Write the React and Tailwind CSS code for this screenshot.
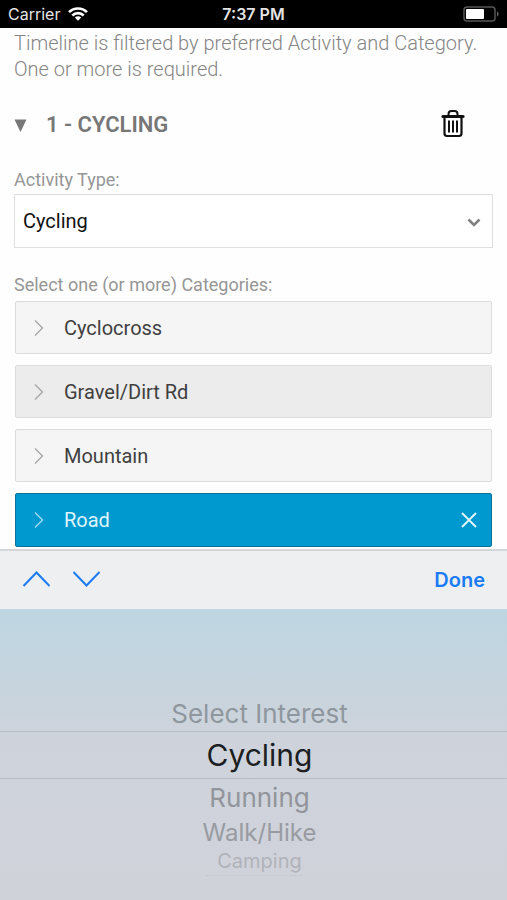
import { useState } from "react";
import { clsx } from "clsx";

const categories = ["Cyclocross", "Gravel/Dirt Rd", "Mountain", "Road"];

// The wheel fades and shrinks towards its lower edge
const wheelItems = [
  { label: "Select Interest", className: "h-9 text-[26px] text-[#8f979e]" },
  {
    label: "Cycling",
    className: "h-12 border-y border-[#b9bdc3] text-[30px] text-[#1c1e22]",
  },
  { label: "Running", className: "h-9 text-[26px] text-[#92959b]" },
  { label: "Walk/Hike", className: "h-9 text-2xl text-[#989ba1]" },
  { label: "Camping", className: "h-5 text-xl text-[#b0b3b9]" },
];

const StatusBar = () => (
  <header className="flex h-7 shrink-0 items-center bg-black px-2 font-[Inter,sans-serif] text-base text-[#e4e4e4]">
    <div className="flex flex-1 items-center gap-2">
      <span>Carrier</span>
      <svg width="20" height="14" viewBox="0 0 20 14" fill="none" aria-hidden="true">
        <g stroke="#fff" strokeWidth="2.6">
          <path d="M1 5.2C6 .2 14 .2 19 5.2" />
          <path d="M4.3 8.5c3.2-3.2 8.2-3.2 11.4 0" />
        </g>
        <path d="M6.8 10.6c1.8-1.7 4.6-1.7 6.4 0L10 13.8z" fill="#fff" />
      </svg>
    </div>
    <span className="font-semibold">7:37 PM</span>
    <div className="flex flex-1 justify-end">
      <svg width="36" height="16" viewBox="0 0 36 16" fill="none" aria-hidden="true">
        <rect x="1" y="1" width="31" height="14" rx="3" stroke="#555" strokeWidth="1.5" />
        <rect x="3" y="3" width="18" height="10" rx="1" fill="#fff" />
        <path d="M34 5.5c2 .6 2 4.4 0 5z" fill="#666" />
      </svg>
    </div>
  </header>
);

const TrashIcon = () => (
  <svg width="24" height="28" viewBox="0 0 24 28" fill="none" stroke="#111" aria-hidden="true">
    <path d="M7.5 5V4q0-3 3-3h3q3 0 3 3v1" strokeWidth="2" />
    <path d="M2 6.500h20" strokeWidth="3.200" strokeLinecap="round" />
    <path d="M3.500 7v16.500q0 2.500 2.500 2.500h12q2.500 0 2.500-2.500V7" strokeWidth="2.200" />
    <path d="M8 10.500v12M12 10.500v12M16 10.500v12" strokeWidth="2" />
  </svg>
);

const CategoryRow = ({ name, index, selected, onToggle }) => (
  <li>
    <button
      type="button"
      aria-pressed={selected}
      onClick={() => onToggle(name)}
      className={clsx(
        "flex w-full items-center rounded-xs border pr-3.5 pl-4.5 text-left text-xl",
        selected
          ? "h-[54px] border-[#0f7199] bg-[#0099cf] text-[#dff5fd]"
          : "h-[53px] border-[#dcdcdc] text-[#404040]",
        !selected && (index % 2 ? "bg-[#ececec]" : "bg-[#f5f5f5]"),
      )}
    >
      <svg width="10" height="16" viewBox="0 0 10 16" fill="none" className="shrink-0" aria-hidden="true">
        <path d="M1 .5 8.5 8 1 15.5" stroke={selected ? "#a6def3" : "#a5a5a5"} strokeWidth="1.3" />
      </svg>
      <span className="ml-5 flex-1">{name}</span>
      {selected && (
        <svg width="16" height="16" viewBox="0 0 16 16" fill="none" aria-hidden="true">
          <path d="m1 1 14 14M15 1 1 15" stroke="#e6f7fd" strokeWidth="1.8" />
        </svg>
      )}
    </button>
  </li>
);

export default function App() {
  const [activity, setActivity] = useState("Cycling");
  const [selected, setSelected] = useState(["Road"]);

  const handleToggle = (name) => {
    setSelected((prev) =>
      prev.includes(name) ? prev.filter((c) => c !== name) : [...prev, name],
    );
  };

  return (
    <div className="flex min-h-screen flex-col bg-[#fefefe] font-[Roboto,sans-serif]">
      <StatusBar />

      <main className="px-3.5 pt-0.5 pb-0.5">
        <p className="text-xl leading-[26px] font-light text-[#858585]">
          Timeline is filtered by preferred Activity and Category. One or more
          is required.
        </p>

        <div className="mt-6 flex h-9 items-center justify-between pr-7">
          <h2>
            <button type="button" className="flex items-center text-[22px] font-semibold text-[#777]">
              <svg width="13" height="16" viewBox="0 0 13 16" className="mr-[19px]" aria-hidden="true">
                <path d="M.5 3.500h12l-6 12.500z" fill="#777" />
              </svg>
              1 - CYCLING
            </button>
          </h2>
          <button type="button" aria-label="Delete activity">
            <TrashIcon />
          </button>
        </div>

        <label htmlFor="activity" className="mt-[26px] block text-lg leading-6 text-[#969696]">
          Activity Type:
        </label>
        <div className="relative mt-0.5">
          <select
            id="activity"
            value={activity}
            onChange={(e) => setActivity(e.target.value)}
            className="block h-[54px] w-full appearance-none border border-[#dfdfdf] bg-white px-2 text-xl text-[#111]"
          >
            <option>Cycling</option>
            <option>Running</option>
            <option>Walk/Hike</option>
            <option>Camping</option>
          </select>
          <svg
            width="14"
            height="10"
            viewBox="0 0 14 10"
            fill="none"
            className="pointer-events-none absolute top-6 right-3"
            aria-hidden="true"
          >
            <path d="m1.5 1.500 5.500 5.500 5.500-5.500" stroke="#808080" strokeWidth="2.6" />
          </svg>
        </div>

        <h3 className="mt-[25px] text-lg leading-6 text-[#969696]">
          Select one (or more) Categories:
        </h3>
        <ul className="mx-px mt-1 space-y-[11px]">
          {categories.map((name, i) => (
            <CategoryRow
              key={name}
              name={name}
              index={i}
              selected={selected.includes(name)}
              onToggle={handleToggle}
            />
          ))}
        </ul>
      </main>

      <div className="flex h-[60px] shrink-0 items-center border-t-2 border-[#d5d6d8] bg-[#eeeff0] px-[22px]">
        <button type="button" aria-label="Previous field">
          <svg width="29" height="18" viewBox="0 0 29 18" fill="none" aria-hidden="true">
            <path d="M1.5 15 14.5 1.500 27.500 15" stroke="#1a7cf5" strokeWidth="2" />
          </svg>
        </button>
        <button type="button" aria-label="Next field" className="ml-[21px]">
          <svg width="29" height="18" viewBox="0 0 29 18" fill="none" aria-hidden="true">
            <path d="M1.5 1 14.5 14.500 27.500 1" stroke="#1a7cf5" strokeWidth="2" />
          </svg>
        </button>
        <button
          type="button"
          className="ml-auto font-[Inter,sans-serif] text-xl font-semibold text-[#1a7cf5]"
        >
          Done
        </button>
      </div>

      <div
        role="listbox"
        aria-label="Activity"
        className="flex-1 bg-linear-to-b from-[#bdd6e2] via-[#ced3db] via-45% to-[#d0d2da] pt-[86px] font-[Inter,sans-serif]"
      >
        {wheelItems.map(({ label, className }) => (
          <button
            key={label}
            type="button"
            role="option"
            aria-selected={label === activity}
            onClick={() => label !== "Select Interest" && setActivity(label)}
            className={clsx("flex w-full items-center justify-center pl-3", className)}
          >
            {label}
          </button>
        ))}
        <div className="mx-auto mt-1 w-24 border-t border-dotted border-[#c2c4cb]" />
      </div>
    </div>
  );
}
